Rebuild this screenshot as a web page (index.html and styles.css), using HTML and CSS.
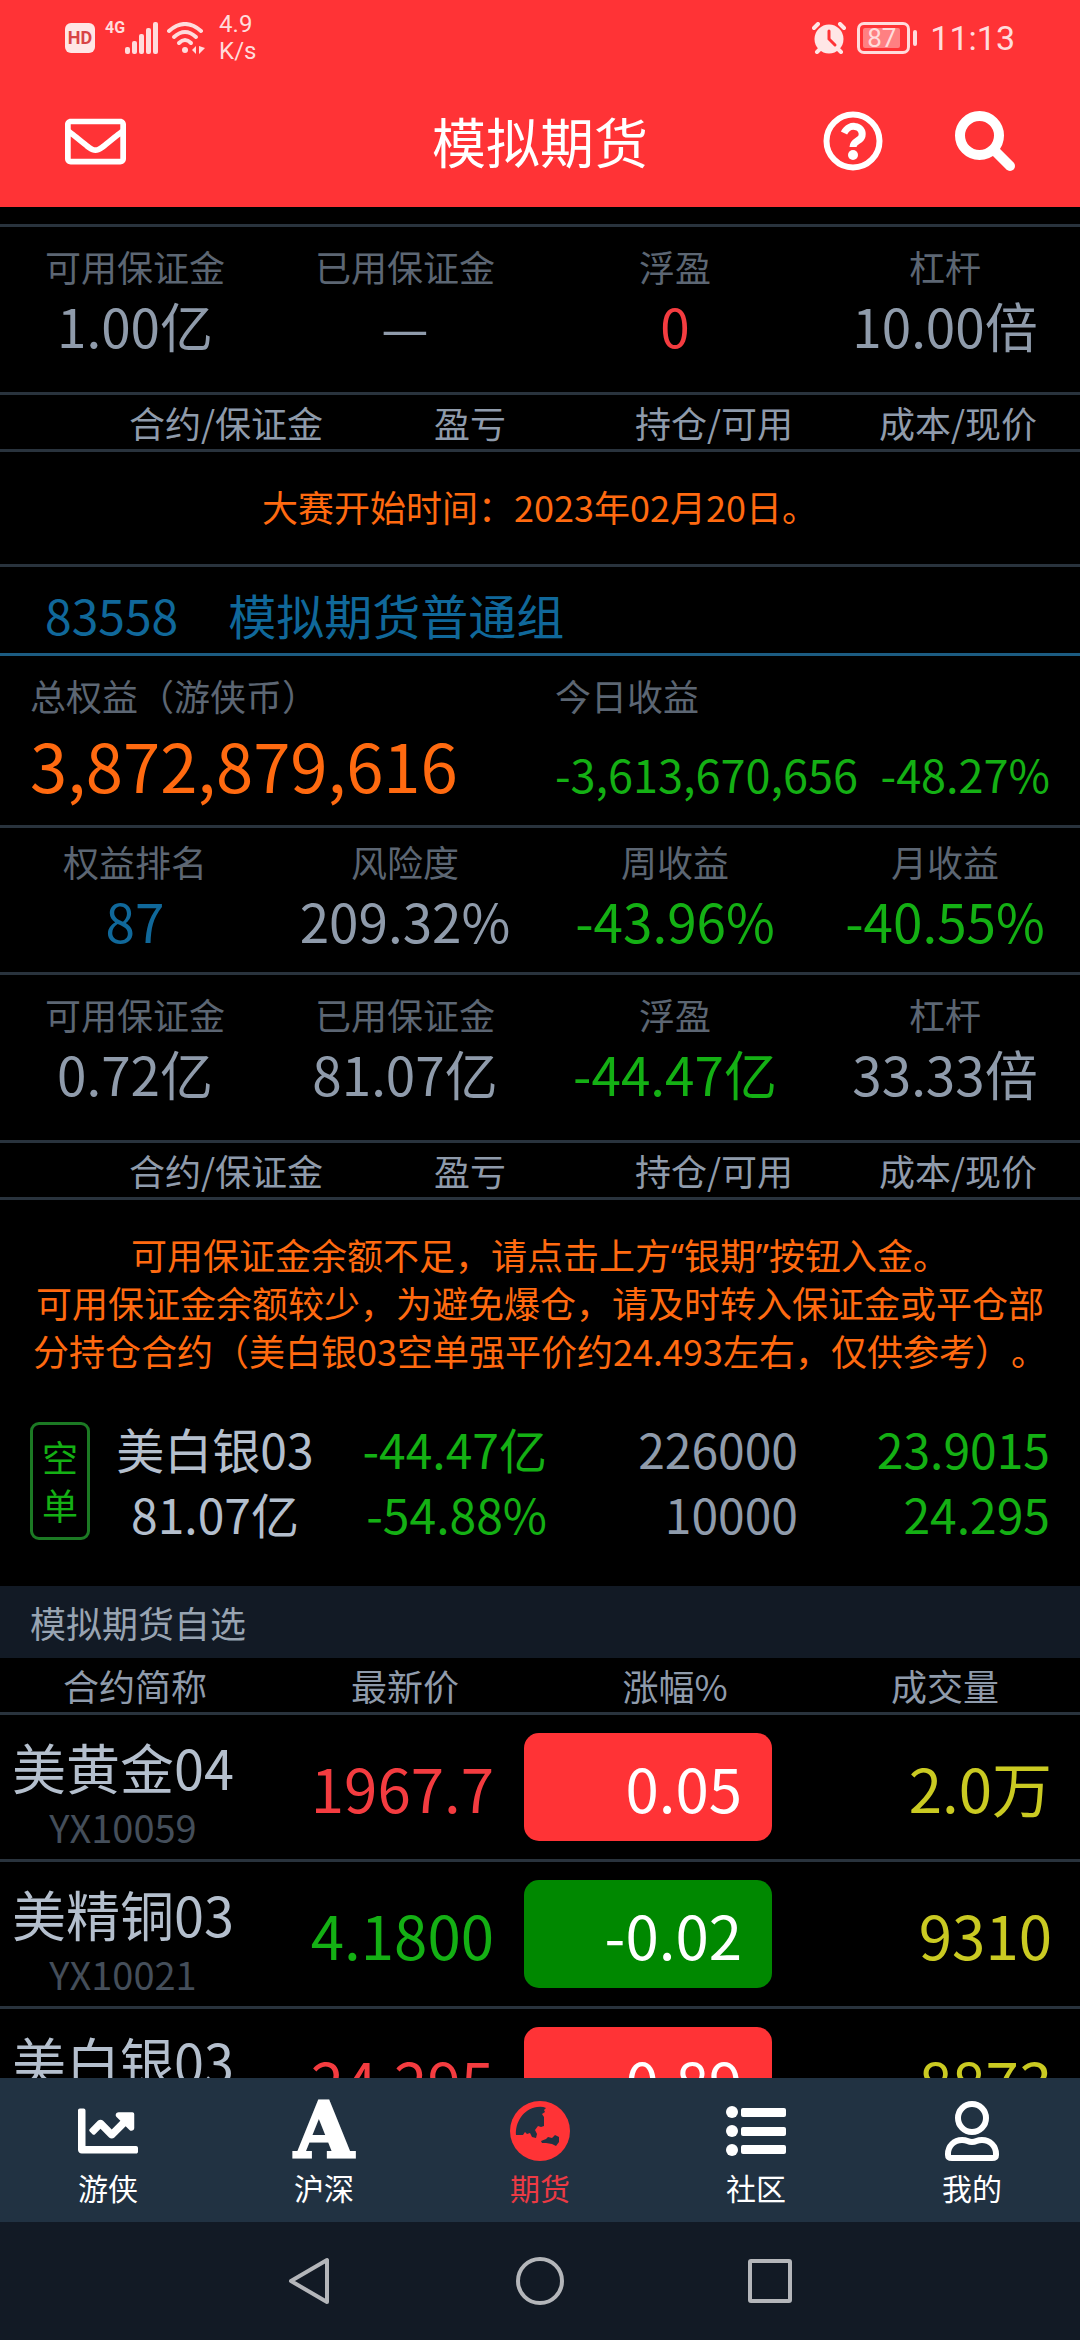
FILE: index.html
```html
<!DOCTYPE html>
<html lang="zh-CN">
  <head>
    <meta charset="utf-8" />
    <meta name="viewport" content="width=device-width, initial-scale=1" />
    <title>模拟期货</title>
    <link rel="stylesheet" href="styles.css" />
  </head>
  <body>
    <header class="header">
      <div class="status">
        <div class="status-left">
          <span class="hd">HD</span>
          <span class="net">4G</span>
          <svg class="signal" width="34" height="32" viewBox="0 0 34 32" fill="#ffdcdc">
            <rect x="0" y="25" width="5" height="7" rx="2" />
            <rect x="7" y="19" width="5" height="13" rx="2" />
            <rect x="14" y="12" width="5" height="20" rx="2" />
            <rect x="21" y="6" width="5" height="26" rx="2" />
            <rect x="28" y="0" width="5" height="32" rx="2" />
          </svg>
          <svg class="wifi" width="38" height="32" viewBox="0 0 38 32" fill="none" stroke="#ffdcdc" stroke-width="4" stroke-linecap="round">
            <path d="M2 9Q18-5 34 9" />
            <path d="M7 15Q18 5 29 15" />
            <path d="M12 21Q18 15 24 21" />
            <circle cx="18" cy="28" r="3" fill="#ffdcdc" stroke="none" />
            <path d="M29 24v8l-4-4zM32 24v8l6-6z" fill="#ffdcdc" stroke="none" />
          </svg>
          <span class="speed">4.9<br />K/s</span>
        </div>
        <div class="status-right">
          <svg width="34" height="32" viewBox="0 0 34 32" fill="none" stroke="#ffe6e6" stroke-width="4" stroke-linecap="round">
            <circle cx="17" cy="17" r="14.5" fill="#ffe6e6" stroke="none" />
            <path d="M2 6l4-4M32 6l-4-4M5 30l4-4M29 30l-4-4" />
            <path d="M17 9v8l6 6" stroke="#ff3336" stroke-width="3" />
          </svg>
          <span class="battery"><span class="level">87</span></span>
          <span class="time">11:13</span>
        </div>
      </div>
      <div class="titlebar">
        <div class="bar-left">
          <button type="button" class="icon-btn" aria-label="消息">
            <svg width="61" height="61" viewBox="0 0 512 512" fill="#fff">
              <path d="M464 64H48C21.49 64 0 85.49 0 112v288c0 26.51 21.49 48 48 48h416c26.51 0 48-21.49 48-48V112c0-26.51-21.49-48-48-48zm0 48v40.805c-22.422 18.259-58.168 46.651-134.587 106.49-16.841 13.247-50.201 45.072-73.413 44.701-23.208.375-56.579-31.459-73.413-44.701C106.18 199.465 70.425 171.067 48 152.805V112h416zM48 400V214.398c22.914 18.251 55.409 43.862 104.938 82.646 21.857 17.205 60.134 55.186 103.062 54.955 42.717.231 80.509-37.199 103.053-54.947 49.528-38.783 82.032-64.401 104.947-82.653V400H48z" />
            </svg>
          </button>
        </div>
        <h1>模拟期货</h1>
        <div class="bar-right">
          <button type="button" class="icon-btn" aria-label="帮助">
            <svg width="60" height="60" viewBox="0 0 60 60">
              <circle cx="30" cy="30" r="26.5" fill="none" stroke="#fff" stroke-width="6" />
              <path d="M21 22C24 16 29 15 32 15.500C37 16 40 20 39 25C38 30 30 30 30 36" fill="none" stroke="#fff" stroke-width="7" />
              <circle cx="30" cy="44" r="5" fill="#fff" />
            </svg>
          </button>
          <button type="button" class="icon-btn" aria-label="搜索">
            <svg width="60" height="60" viewBox="0 0 60 60" fill="none" stroke="#fff">
              <circle cx="24.500" cy="24.500" r="19.500" stroke-width="10" />
              <path d="M40 40l15 15" stroke-width="10" stroke-linecap="round" />
              <path d="M37 37l8 8" stroke-width="7" />
            </svg>
          </button>
        </div>
      </div>
    </header>

    <main class="content">
      <section class="group first">
        <dl class="stats tall">
          <div><dt>可用保证金</dt><dd>1.00亿</dd></div>
          <div><dt>已用保证金</dt><dd>—</dd></div>
          <div><dt>浮盈</dt><dd class="red">0</dd></div>
          <div><dt>杠杆</dt><dd>10.00倍</dd></div>
        </dl>
        <table class="positions">
          <thead>
            <tr>
              <th>合约/保证金</th>
              <th>盈亏</th>
              <th>持仓/可用</th>
              <th>成本/现价</th>
            </tr>
          </thead>
        </table>
        <p class="notice">大赛开始时间：2023年02月20日。</p>
      </section>

      <section class="group">
        <h2 class="group-title"><span>83558</span><span>模拟期货普通组</span></h2>
        <div class="total">
          <span class="label">总权益（游侠币）</span>
          <span class="label">今日收益</span>
          <span class="amount">3,872,879,616</span>
          <span class="today green"><span>-3,613,670,656</span><span>-48.27%</span></span>
        </div>
        <dl class="stats">
          <div><dt>权益排名</dt><dd class="blue">87</dd></div>
          <div><dt>风险度</dt><dd>209.32%</dd></div>
          <div><dt>周收益</dt><dd class="green">-43.96%</dd></div>
          <div><dt>月收益</dt><dd class="green">-40.55%</dd></div>
        </dl>
        <dl class="stats tall">
          <div><dt>可用保证金</dt><dd>0.72亿</dd></div>
          <div><dt>已用保证金</dt><dd>81.07亿</dd></div>
          <div><dt>浮盈</dt><dd class="green">-44.47亿</dd></div>
          <div><dt>杠杆</dt><dd>33.33倍</dd></div>
        </dl>
        <table class="positions">
          <thead>
            <tr>
              <th>合约/保证金</th>
              <th>盈亏</th>
              <th>持仓/可用</th>
              <th>成本/现价</th>
            </tr>
          </thead>
          <tbody>
            <tr class="warn">
              <td class="notice">
                可用保证金余额不足，请点击上方<span class="quote">“</span>银期<span class="quote">”</span>按钮入金。<br />可用保证金余额较少，为避免爆仓，请及时转入保证金或平仓部分持仓合约（美白银03空单强平价约24.493左右，仅供参考）。
              </td>
            </tr>
            <tr class="position">
              <td class="side">空单</td>
              <td class="name">美白银03<br />81.07亿</td>
              <td class="green">-44.47亿<br />-54.88%</td>
              <td>226000<br />10000</td>
              <td class="green">23.9015<br />24.295</td>
            </tr>
          </tbody>
        </table>
      </section>

      <section>
        <h2 class="section-bar">模拟期货自选</h2>
        <table class="watchlist">
          <thead>
            <tr>
              <th>合约简称</th>
              <th>最新价</th>
              <th>涨幅%</th>
              <th>成交量</th>
            </tr>
          </thead>
          <tbody>
            <tr>
              <td class="contract"><div>美黄金04<small>YX10059</small></div></td>
              <td class="price red">1967.7</td>
              <td class="change up">0.05</td>
              <td class="volume">2.0万</td>
            </tr>
            <tr>
              <td class="contract"><div>美精铜03<small>YX10021</small></div></td>
              <td class="price green">4.1800</td>
              <td class="change down">-0.02</td>
              <td class="volume">9310</td>
            </tr>
            <tr>
              <td class="contract"><div>美白银03<small>YX10020</small></div></td>
              <td class="price red">24.295</td>
              <td class="change up">0.89</td>
              <td class="volume">8873</td>
            </tr>
          </tbody>
        </table>
      </section>
    </main>

    <nav class="tabs">
      <a href="#home">
        <svg width="60" height="60" viewBox="0 0 512 512" fill="#fff">
          <path d="M496 384H64V80c0-8.840-7.160-16-16-16H16C7.160 64 0 71.160 0 80v336c0 17.670 14.330 32 32 32h464c8.840 0 16-7.160 16-16v-32c0-8.840-7.160-16-16-16zM464 96H345.940c-21.380 0-32.090 25.850-16.970 40.970l32.400 32.400L288 242.750l-73.370-73.370c-12.500-12.500-32.760-12.500-45.250 0l-68.690 68.690c-6.250 6.250-6.250 16.380 0 22.630l22.620 22.620c6.250 6.250 16.380 6.250 22.630 0L192 237.250l73.370 73.370c12.500 12.500 32.760 12.500 45.250 0l96-96 32.400 32.400c15.120 15.120 40.970 4.410 40.970-16.970V112c.01-8.840-7.150-16-15.990-16z" />
        </svg>
        <span>游侠</span>
      </a>
      <a href="#stock">
        <span class="letter" aria-hidden="true">A</span>
        <span>沪深</span>
      </a>
      <a href="#futures" class="active">
        <svg width="60" height="60" viewBox="0 0 60 60">
          <circle cx="30" cy="30" r="30" fill="#ff3336" />
          <path d="M6 34C5 22 13 8 27 6Q32 5 36 7L34 9L35 11L32 13L34 16V25L31 26L28 25L25 29L27 33L26 37L22 36L20 32L17 33L15 31L13 34Z" fill="#213242" />
          <path d="M31 40L36 38L38 36L42 37L45 34L49 36V41L46 45L42 43L36 42L32 42Z" fill="#213242" />
        </svg>
        <span>期货</span>
      </a>
      <a href="#community">
        <svg width="60" height="60" viewBox="0 0 60 60" fill="#fff">
          <circle cx="6" cy="11" r="6" />
          <circle cx="6" cy="30" r="6" />
          <circle cx="6" cy="49" r="6" />
          <rect x="15" y="7" width="45" height="9" rx="2" />
          <rect x="15" y="26" width="45" height="9" rx="2" />
          <rect x="15" y="44" width="45" height="9" rx="2" />
        </svg>
        <span>社区</span>
      </a>
      <a href="#mine">
        <svg width="60" height="60" viewBox="0 0 60 60" fill="none" stroke="#fff" stroke-width="6">
          <circle cx="30" cy="17" r="14" />
          <path d="M20 39C26 39 25 41 30 41S34 39 40 39C48 39 54 45 54 53V54Q54 57 50 57H10Q6 57 6 54V53C6 45 12 39 20 39Z" />
        </svg>
        <span>我的</span>
      </a>
    </nav>

    <div class="sysnav">
      <button type="button" class="icon-btn" aria-label="返回">
        <svg width="48" height="48" viewBox="0 0 48 48" fill="none" stroke="#b4b6ba" stroke-width="4" stroke-linejoin="round">
          <path d="M41 3v42L5 24z" />
        </svg>
      </button>
      <button type="button" class="icon-btn" aria-label="主页">
        <svg width="48" height="48" viewBox="0 0 48 48" fill="none" stroke="#b4b6ba" stroke-width="4">
          <circle cx="24" cy="24" r="22" />
        </svg>
      </button>
      <button type="button" class="icon-btn" aria-label="最近任务">
        <svg width="48" height="48" viewBox="0 0 48 48" fill="none" stroke="#b4b6ba" stroke-width="4">
          <rect x="4" y="4" width="40" height="40" rx="1" />
        </svg>
      </button>
    </div>
  </body>
</html>
```

FILE: styles.css
```css
* {
  margin: 0;
  padding: 0;
  box-sizing: border-box;
}
body {
  display: flex;
  flex-direction: column;
  height: 100vh;
  background-color: #000;
  color: #8f9bab;
  font-family: "Noto Sans CJK SC", sans-serif;
  font-size: 36px;
  line-height: 48px;
  text-spacing-trim: space-all;
}
svg {
  display: block;
}
h1,
h2,
th {
  font-weight: 400;
}
.icon-btn {
  display: flex;
  border: none;
  background: none;
}

/* header */
.header {
  background-color: #ff3336;
  color: #fff;
}
.status {
  display: flex;
  justify-content: space-between;
  align-items: center;
  height: 75px;
  padding: 0 65px;
  color: #ffdcdc;
  font-family: Roboto, sans-serif;
}
.status-left,
.status-right {
  display: flex;
  align-items: center;
}
.hd {
  width: 30px;
  border-radius: 6px;
  background-color: #ffe6e6;
  color: #d84446;
  font-size: 18px;
  font-weight: 700;
  line-height: 30px;
  text-align: center;
}
.net {
  align-self: flex-start;
  padding-top: 8px;
  margin-left: 10px;
  font-size: 16px;
  font-weight: 700;
  line-height: 18px;
}
.wifi {
  margin-left: 8px;
}
.speed {
  margin-left: 14px;
  font-size: 24px;
  line-height: 27px;
}
.battery {
  position: relative;
  width: 53px;
  margin-left: 11px;
  padding: 3px;
  border: 3px solid #ffdcdc;
  border-radius: 7px;
}
.battery::after {
  content: "";
  position: absolute;
  top: 5px;
  right: -10px;
  width: 4px;
  height: 16px;
  border-radius: 2px;
  background-color: #ffdcdc;
}
.level {
  display: block;
  width: 37px;
  border-radius: 2px;
  background-color: #ff8082;
  font-size: 26px;
  line-height: 20px;
  text-align: center;
}
.time {
  margin-left: 20px;
  font-size: 34px;
}
.titlebar {
  display: grid;
  grid-template-columns: 1fr auto 1fr;
  align-items: center;
  height: 132px;
  padding: 0 65px;
}
.titlebar h1 {
  font-size: 54px;
  line-height: 66px;
}
.bar-right {
  display: flex;
  justify-content: flex-end;
  gap: 72px;
}

/* content */
.content {
  flex: 1;
  min-height: 0;
  overflow: hidden;
}
.first {
  margin-top: 17px;
  border-top: 3px solid #29333d;
}
.red {
  color: #f43c40;
}
.green {
  color: #14b014;
}
.blue {
  color: #10689a;
}
.stats {
  display: grid;
  grid-template-columns: repeat(4, 1fr);
  padding: 9px 0 17px;
  border-bottom: 3px solid #29333d;
  text-align: center;
}
.tall {
  padding: 15px 0 32px;
}
.stats dt,
.label {
  color: #5c6673;
}
.stats dd {
  font-size: 53px;
  line-height: 70px;
}
table {
  display: block;
}
thead,
tbody {
  display: block;
}
th {
  line-height: 54px;
  text-align: center;
}
tr {
  display: grid;
}
thead tr {
  border-bottom: 3px solid #29333d;
}
.positions thead tr {
  grid-template-columns: repeat(4, 1fr);
  padding-left: 104px;
}
.notice {
  padding: 30px 30px 34px;
  color: #ff6a10;
  text-align: center;
}
.quote {
  font-family: "Noto Sans", sans-serif;
  line-height: 1;
}
.group-title {
  display: flex;
  gap: 50px;
  padding: 14px 45px 6px;
  border-top: 3px solid #29333d;
  border-bottom: 3px solid #1c5c82;
  color: #10689a;
  font-size: 48px;
  line-height: 66px;
}
.total {
  display: grid;
  grid-template-columns: 35fr 33fr;
  align-items: baseline;
  padding: 15px 30px 16px;
  border-bottom: 3px solid #29333d;
}
.amount {
  color: #ff6a10;
  font-size: 67px;
  line-height: 90px;
}
.today {
  display: flex;
  justify-content: space-between;
  font-size: 45px;
  line-height: 66px;
}
.position {
  grid-template-columns: 60fr 250fr 207fr 251fr 252fr;
  align-items: center;
  padding: 8px 30px 40px;
  font-size: 48px;
  line-height: 65px;
  text-align: right;
}
.position .name {
  color: #b4bfcd;
  text-align: center;
}
.side {
  padding: 7px 9px 9px;
  border: 3px solid #1c7a24;
  border-radius: 9px;
  color: #14b014;
  font-size: 36px;
  line-height: 48px;
  text-align: center;
}

/* watch list */
.section-bar {
  padding: 12px 30px;
  background-color: #121a25;
  color: #98a4b2;
  font-size: 36px;
}
.watchlist tr {
  grid-template-columns: repeat(4, 1fr);
  border-bottom: 3px solid #29333d;
}
.watchlist tbody tr {
  grid-template-columns: 270fr 224fr 278fr 308fr;
  align-items: center;
  font-size: 60px;
  line-height: 108px;
  text-align: right;
}
.watchlist .contract {
  padding: 16px 12px 8px;
  color: #b4bfcd;
  font-size: 54px;
  line-height: 72px;
  text-align: left;
}
.contract div {
  display: inline-block;
  vertical-align: top;
  text-align: center;
}
.contract small {
  display: block;
  color: #444e5a;
  font-size: 38px;
  line-height: 48px;
}
.change {
  margin-left: 30px;
  padding-right: 30px;
  border-radius: 15px;
  color: #fff;
}
.up {
  background-color: #ff3336;
}
.down {
  background-color: #008800;
}
.volume {
  padding-right: 28px;
  color: #caca22;
}

/* bottom tabs */
.tabs {
  display: grid;
  grid-template-columns: repeat(5, 1fr);
  padding: 23px 0 9px;
  background-color: #213242;
}
.tabs a {
  display: flex;
  flex-direction: column;
  align-items: center;
  color: #fff;
  font-size: 30px;
  line-height: 52px;
  text-decoration: none;
}
.tabs .active {
  color: #ec3a44;
}
.tabs .letter {
  font-family: "DejaVu Serif", serif;
  font-size: 76px;
  font-weight: 700;
  line-height: 60px;
  -webkit-text-stroke: 3px #fff;
}
.sysnav {
  display: flex;
  justify-content: center;
  gap: 182px;
  padding: 35px 0;
  background-color: #121a25;
}
```
